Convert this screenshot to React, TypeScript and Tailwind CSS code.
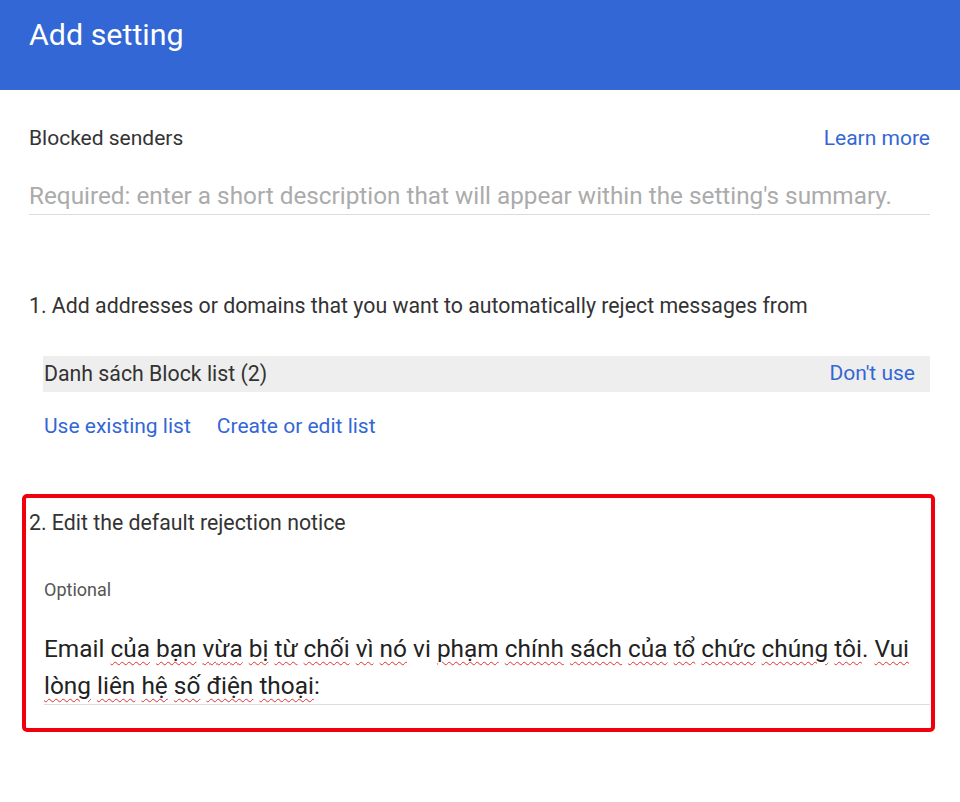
const BLUE = "text-[#3367d6]";

const words1 = "Email của bạn vừa bị từ chối vì nó vi phạm chính sách của tổ chức chúng tôi. Vui lòng liên hệ số điện thoại:".split(" ");
const noSquiggle = new Set(["Email", "vi"]);

const Misspelled = ({ word }: { word: string }) => {
  // keep trailing punctuation out of the squiggle
  const m = word.match(/^(.*?)([.:]?)$/);
  const core = m ? m[1] : word;
  const tail = m ? m[2] : "";
  if (noSquiggle.has(core)) return <>{word}</>;
  return (
    <>
      <span className="underline decoration-wavy decoration-[#e0322f] decoration-1 underline-offset-[4px]">
        {core}
      </span>
      {tail}
    </>
  );
};

export default function App() {
  return (
    <div className="min-h-[802px] w-[960px] bg-white font-['Roboto',sans-serif]">
      <header className="h-[90px] bg-[#3367d6] pl-[29px] pt-[17px]">
        <h1 className="text-[30.4px] leading-[36px] text-white">Add setting</h1>
      </header>

      <main className="pl-[29px] pr-[30px]">
        <div className="mt-[34px] flex items-center justify-between leading-[28px]">
          <span className="text-[21px] text-[#333]">Blocked senders</span>
          <a className={`text-[21px] ${BLUE}`}>Learn more</a>
        </div>

        <div className="mt-[29px] border-b border-[#dcdcdc] pb-[3px]">
          <input
            type="text"
            placeholder="Required: enter a short description that will appear within the setting's summary."
            className="w-full text-[24.3px] leading-[30px] outline-none placeholder:text-[#ababab]"
          />
        </div>

        <p className="mt-[77px] text-[21.3px] leading-[28px] text-[#333]">
          1. Add addresses or domains that you want to automatically reject messages from
        </p>

        <div className="ml-[14px] mt-[36px] flex h-[36px] items-center justify-between bg-[#eeeeee] pl-[1px] pr-[15px]">
          <span className="text-[21.3px] text-[#333]">Danh sách Block list (2)</span>
          <a className={`text-[21px] ${BLUE}`}>Don't use</a>
        </div>

        <div className={`ml-[15px] mt-[20px] flex gap-[26px] text-[21px] leading-[28px] ${BLUE}`}>
          <a>Use existing list</a>
          <a>Create or edit list</a>
        </div>

        <section className="-ml-[7px] -mr-[5px] mt-[54px] rounded-[5px] border-4 border-[#f0000c] pb-[23px] pl-[3px] pr-[1px] pt-[11px]">
          <p className="text-[21.3px] leading-[28px] text-[#333]">2. Edit the default rejection notice</p>
          <div className="ml-[15px] mt-[41px] text-[18px] leading-[24px] text-[#555]">Optional</div>
          <div className="ml-[15px] mt-[28px] border-b border-[#dcdcdc] text-[24.4px] leading-[37px] text-[#222]">
            {words1.map((w, i) => (
              <span key={i}>
                <Misspelled word={w} />
                {i < words1.length - 1 ? " " : ""}
              </span>
            ))}
          </div>
        </section>
      </main>
    </div>
  );
}
